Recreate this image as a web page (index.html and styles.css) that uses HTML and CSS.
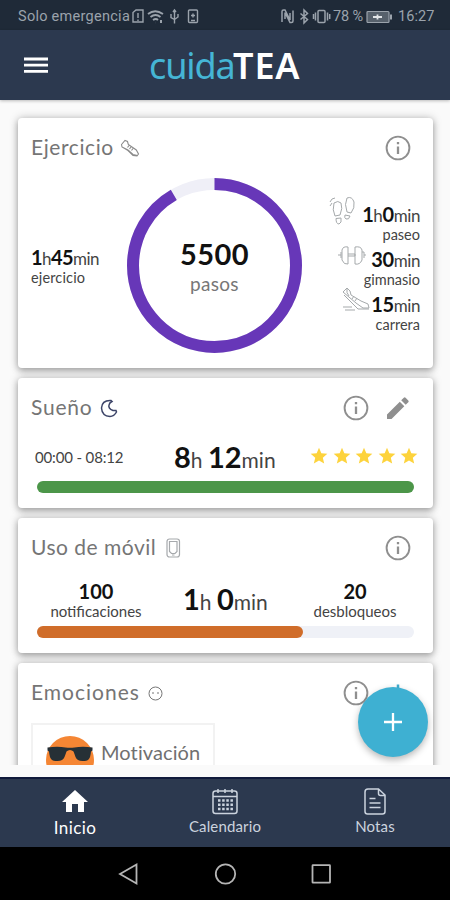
FILE: index.html
```html
<!DOCTYPE html>
<html lang="es">
<head>
<meta charset="utf-8">
<title>cuidaTEA</title>
<link rel="stylesheet" href="styles.css">
</head>
<body>
<svg width="0" height="0" class="defs">
  <symbol id="info" viewBox="0 0 26 26"><circle cx="13" cy="13" r="11.4" fill="none" stroke="#8f8f8f" stroke-width="1.9"/><path d="M13 11.5V19M13 7V9.2" stroke="#8f8f8f" stroke-width="2.3"/></symbol>
  <symbol id="star" viewBox="0 0 24 24"><path d="M12 17.3 18.2 21l-1.6-7L22 9.2l-7.2-.6L12 2 9.2 8.6 2 9.2 7.5 14l-1.7 7z" fill="#fdd33c"/></symbol>
</svg>
<div class="status">
  <span class="carrier">Solo emergencia</span>
  <svg class="icons-left" width="68" height="18" fill="none" stroke="#9ba3ac" stroke-width="1.4">
    <path d="M2 4.500 5 2h7v12H2zM7 5v5M7 11.500V13"/>
    <path d="M17 6q7-5.500 15 0M19.500 9q5-4 10 0M22 12q3-2 5 0" stroke-width="1.8"/><path d="M24.500 14.500h.1M30 12v3" stroke-width="2"/>
    <path d="M43.500 2V15.500M40 6v3.500l3.500 2L47 9V6M42 4l1.500-2L45 4"/>
    <rect x="57.500" y="2" width="9" height="12.500" rx="1"/><path d="M60 7.500h4M62 5.500v4M60 12.500h4"/>
  </svg>
  <svg class="icons-right" width="53" height="18" fill="none" stroke="#9ba3ac" stroke-width="1.500">
    <path d="M2 14V3.500Q2 2 3.500 2H5l5 10V5M13 2.500V13q0 1.500-1.500 1.500H10L5 4.500V11"/>
    <path d="m20.500 5.500 7 6-3.500 3.500V2l3.500 3.500-7 6"/>
    <rect x="38" y="2.500" width="7" height="12" rx="1"/><path d="M35.500 4.500v8M33.500 6v5M47.500 4.500v8M49.700 6v5"/>
  </svg>
  <span class="pct">78 %</span>
  <svg class="battery" width="27" height="14"><rect x="1" y="1.500" width="22" height="11" rx="1" fill="#57616c" stroke="#9ba3ac" stroke-width="1.2"/><path d="M25 4.500v5" stroke="#9ba3ac" stroke-width="2"/><path d="M7 7h9M11.500 4.500v5" stroke="#e2e5e8" stroke-width="1.8"/></svg>
  <span class="clock">16:27</span>
</div>
<header class="appbar">
  <svg class="menu" width="24" height="18" stroke="#fff" stroke-width="2.800"><path d="M0 3h24M0 9.200h24M0 15.400h24"/></svg>
  <h1 class="logo"><span class="logo-a">cuida</span><span class="logo-b">TEA</span></h1>
</header>
<main class="content">
  <section class="card exercise">
    <div class="card-head"><h2 class="t-ej">Ejercicio</h2>
      <svg class="shoe" width="20" height="20" fill="none" stroke="#8b8b8b" stroke-width="1.100"><path d="M1.500 6.500 5 2.500l2.500 1 .8 3 8 5.500 2.200 4-1.500 2-4-.5L8 12.500 2 9zM2 9l6 3 5 4.500 4.500 1M9 7.500l-1.500 2M11 9l-1.500 2M13 10.500 11.500 12.500"/></svg>
      <svg class="info" width="26" height="26"><use href="#info"/></svg>
    </div>
    <div class="ex-body">
      <div class="ex-left"><div class="num"><b>1</b>h<b>45</b>min</div><div class="lab">ejercicio</div></div>
      <div class="ring">
        <svg width="175" height="175" viewBox="0 0 175 175" fill="none" stroke-width="12"><circle cx="87.500" cy="87.500" r="81.500" stroke="#efeff7"/><circle cx="87.500" cy="87.500" r="81.500" stroke="#6737b8" pathLength="360" stroke-dasharray="330 30" transform="rotate(-90 87.500 87.500)"/></svg>
        <div class="ring-text"><b>5500</b><span>pasos</span></div>
      </div>
      <div class="ex-right">
        <div class="act walk"><svg width="28" height="30" fill="none" stroke="#a5a9ab" stroke-width="1"><path d="M5 7q4-3 7 0 2 5-1 12l-5 1q-3-6-1-13zM7 22.500l5-.5q1 5-2 6-3 0-3-5.500zM1 6l2-3 3-1M1 10l2-3M18 2q5-2 7 4 1 6-3 11l-4-1q-3-8 0-14zM16 19l5 1q-1 4-4 3-2-1-1-4z"/></svg><div><div class="num"><b>1</b>h<b>0</b>min</div><div class="lab">paseo</div></div></div>
        <div class="act gym"><svg width="28" height="30" fill="none" stroke="#a5a9ab" stroke-width="1"><path d="M0 14h3M3 11v6M4 9q1-4 6-3v17q-4 1-6-4zM10 13h7v2h-7M17 6q6-1 7 3v10q-2 5-7 4zM24 11h2v6M26 14h2"/></svg><div><div class="num"><b>30</b>min</div><div class="lab">gimnasio</div></div></div>
        <div class="act run"><svg width="28" height="30" fill="none" stroke="#a5a9ab" stroke-width="1"><path d="M1 6 5 2l3 3 1 4 10 6 7 3 1 4h-6l-7-5L1 6zM2 9l14 14h11M1 21h9M3 24h10M12 10l-2 3M15 12l-2 3M5 2q-1 5 2 8"/></svg><div><div class="num"><b>15</b>min</div><div class="lab">carrera</div></div></div>
      </div>
    </div>
  </section>
  <section class="card sleep">
    <div class="card-head"><h2 class="t-su">Sueño</h2>
      <svg class="moon" width="18" height="19" fill="none" stroke="#3c4468" stroke-width="1.500"><path d="M11 1.500Q2 1 1.500 9q.5 8 8.500 8.500 4 0 6.500-4.500l-.5-1.500h-3Q8 9.500 9 6q.5-2.500 3-3.500z"/></svg>
      <svg class="info" width="26" height="26"><use href="#info"/></svg>
      <svg class="pencil" width="24" height="24" viewBox="0 0 24 24" fill="#8f8f8f"><path d="M1 18.500V23h4.500L18.300 10.200 13.800 5.700zM22.300 6.200a1.300 1.300 0 0 0 0-1.800l-2.700-2.700a1.300 1.300 0 0 0-1.800 0L15.200 4.300l4.500 4.500z"/></svg>
    </div>
    <div class="row-sleep"><span class="hours">00:00 - 08:12</span><span class="big"><b>8</b>h <b>12</b>min</span>
      <span class="stars"><svg><use href="#star"/></svg><svg><use href="#star"/></svg><svg><use href="#star"/></svg><svg><use href="#star"/></svg><svg><use href="#star"/></svg></span></div>
    <div class="bar green"></div>
  </section>
  <section class="card mobile">
    <div class="card-head"><h2 class="t-mo">Uso de móvil</h2>
      <svg class="phone" width="15" height="20" fill="none" stroke="#a6a9ac" stroke-width="1.200"><rect x="1" y="1" width="12.500" height="18" rx="2.500"/><path d="M3.500 3.500h7.500v10l-2 2H5.500l-2-2zM6 17h2.500"/></svg>
      <svg class="info" width="26" height="26"><use href="#info"/></svg>
    </div>
    <div class="row-mobile"><div class="stat"><b>100</b><span>notificaciones</span></div><span class="big"><b>1</b>h <b>0</b>min</span><div class="stat stat-r"><b>20</b><span>desbloqueos</span></div></div>
    <div class="bar track"><div class="fill"></div></div>
  </section>
  <section class="card emotions">
    <div class="card-head"><h2 class="t-em">Emociones</h2>
      <svg class="face" width="15" height="15" fill="none" stroke="#777" stroke-width="1"><circle cx="7.500" cy="7.500" r="6.500"/><path d="M4 7h2M9 7h2"/></svg>
      <svg class="info" width="26" height="26"><use href="#info"/></svg>
      <svg class="add" width="24" height="24" stroke="#42aed0" stroke-width="2.500"><path d="M12 3.500v18M3 12.500h18"/></svg>
    </div>
    <div class="chip">
      <svg width="48" height="48"><circle cx="24" cy="24" r="24" fill="#f58634"/><path d="M1.500 11.500q10-1.500 18 0 4.500.5 9 0 8-1.500 18 0v3l-1.500 1q-.5 6-2.500 8-1.500 1.500-6 1.500-5.500 0-7-4-1-3-2-5.500-1.500-1.500-3.500-1.500t-3.500 1.500q-1 3-2 5.500-1.500 4-7 4-4.500 0-6-1.500-2-2-2.500-8l-1.500-1z" fill="#263036"/></svg>
      <span>Motivación</span>
    </div>
  </section>
</main>
<button class="fab" aria-label="+"><svg width="20" height="20" stroke="#fff" stroke-width="2.300"><path d="M10 1v18M1 10h18"/></svg></button>
<nav class="tabs">
  <div class="tab active"><svg width="26" height="26"><path d="M13 2 0 14h4v10h6v-8h6v8h6V14h4z" fill="#fff"/></svg><span>Inicio</span></div>
  <div class="tab cal"><svg width="26" height="28" fill="none" stroke="#cbd3de" stroke-width="1.500"><rect x="1" y="3" width="24" height="22.500" rx="2.500"/><path d="M1 8.500h24M6 1v4M13 1v4M20 1v4"/><path d="M6 12.500h15M6 16.700h15M6 21h15" stroke-width="2.500" stroke-dasharray="2.500 1.650"/></svg><span>Calendario</span></div>
  <div class="tab note"><svg width="22" height="28" fill="none" stroke="#cbd3de" stroke-width="1.500"><path d="M4 1h10.500L21 7v16.500q0 2.500-2.500 2.500h-15Q1 26 1 23.500V4q0-3 3-3zM14.500 1v4.500q0 2 2 2H21M5.500 10.500h6M5.500 15h11M5.500 19.500h11"/></svg><span>Notas</span></div>
</nav>
<div class="sysnav">
  <svg width="20" height="24" fill="none" stroke="#b5b5b5" stroke-width="1.800"><path d="M2 12 18.500 2.500v19z"/></svg>
  <svg width="24" height="24" fill="none" stroke="#b5b5b5" stroke-width="1.800"><circle cx="12.500" cy="12" r="9.700"/></svg>
  <svg width="20" height="24" fill="none" stroke="#b5b5b5" stroke-width="1.800"><rect x=".5" y="3.200" width="17.500" height="17.500" rx=".5"/></svg>
</div>
</body>
</html>
```
FILE: styles.css
```css
* { box-sizing: border-box; }
body { margin: 0; width: 450px; height: 900px; overflow: hidden; background: #fafafa; font-family: Lato, "Open Sans", sans-serif; color: #111; display: flex; flex-direction: column; }
svg { display: block; flex: none; overflow: visible; }
.defs { display: none; }
b { font-weight: 700; }
.status { height: 30px; flex: none; background: #1f2a38; display: flex; align-items: center; padding: 3px 15px 0 18px; font: 14.5px/27px Roboto, sans-serif; color: #9ba3ac; white-space: nowrap; }
.carrier { width: 113px; letter-spacing: .27px; }
.icons-left { margin-right: 81px; }
.pct { width: 33px; letter-spacing: -.1px; }
.icons-right { width: 53px; }
.battery { margin-right: 5px; }
.clock { letter-spacing: .1px; }
.appbar { height: 70px; flex: none; background: #2c394f; display: flex; align-items: center; box-shadow: 0 1px 3px rgba(0,0,0,.25); z-index: 2; }
.menu { margin-left: 24px; }
.logo { margin: 2px 0 0 101px; font: 400 36px/70px "Noto Sans", sans-serif; display: flex; }
.logo-a { color: #45b5d5; width: 84px; letter-spacing: -1.1px; }
.logo-b { color: #fff; font-weight: 600; letter-spacing: .9px; }
.content { height: 665px; flex: none; overflow: hidden; padding: 18px 17px 0 18px; display: flex; flex-direction: column; gap: 10px; }
.card { flex: none; background: #fff; border-radius: 4px; padding: 0 13px; box-shadow: 0 3px 6px rgba(0,0,0,.26), 0 0 10px rgba(0,0,0,.22); }
.card-head { height: 60px; display: flex; align-items: center; }
.card-head h2 { margin: 0; padding-bottom: 3px; font: 400 21px/28px Lato, sans-serif; color: #757575; white-space: nowrap; }
.info { margin-left: auto; margin-right: 9px; }
.exercise { height: 250px; }
.t-ej { width: 89px; letter-spacing: .6px; }
.t-su { width: 69px; letter-spacing: .75px; }
.t-mo { width: 135px; letter-spacing: .5px; }
.t-em { width: 117px; letter-spacing: 1px; }
.ex-body { display: grid; grid-template-columns: 96px 175px 1fr; height: 175px; }
.ex-left { padding-top: 68px; }
.num { font-size: 17px; line-height: 22px; height: 22px; color: #444; white-space: nowrap; letter-spacing: -.4px; }
.num b { font-size: 20px; color: #111; }
.lab { font-size: 14.5px; line-height: 20px; color: #444; }
.ex-left .num { letter-spacing: -.55px; }
.ex-left .lab { letter-spacing: .15px; }
.ring { display: grid; }
.ring > * { grid-area: 1 / 1; }
.ring-text { display: flex; flex-direction: column; align-items: center; padding-top: 58px; }
.ring-text b { font-size: 29px; line-height: 36px; letter-spacing: .4px; }
.ring-text span { font-size: 19px; line-height: 24px; color: #777; letter-spacing: .3px; }
.ex-right { padding-top: 18px; }
.act { height: 45px; display: flex; justify-content: flex-end; gap: 5px; text-align: right; }
.act > div { padding-top: 7px; }
.gym { gap: 0; }
.gym svg { margin-right: -2px; }
.run { gap: 1px; }
.sleep { height: 130px; }
.sleep .info, .emotions .info { margin-right: 17px; }
.pencil, .add { margin-right: 10px; }
.row-sleep { height: 43px; display: flex; align-items: flex-start; }
.hours { width: 143px; padding-left: 4px; font-size: 15px; line-height: 38px; color: #444; letter-spacing: -.15px; }
.big { font-size: 21px; line-height: 38px; color: #444; white-space: nowrap; }
.big b { font-size: 29px; color: #111; }
.row-sleep .big { width: 135px; }
.stars { display: flex; gap: 2.600px; padding-top: 8px; }
.stars svg { width: 20px; height: 20px; }
.bar { height: 12px; border-radius: 6px; margin: 0 6px; }
.green { background: #4c9649; }
.mobile { height: 135px; }
.row-mobile { height: 48px; display: flex; }
.stat { width: 130px; padding-top: 3px; display: flex; flex-direction: column; align-items: center; }
.stat b { font-size: 20px; line-height: 21px; }
.stat span { font-size: 15px; line-height: 19px; color: #444; }
.row-mobile .big { width: 129px; padding: 2px 0 0 22px; }
.track { background: #eff1f7; }
.fill { width: 266px; height: 12px; border-radius: 6px; background: #d06d2a; }
.emotions { height: 180px; }
.chip { width: 184px; height: 80px; border: 2px solid #f2f2f2; padding: 11px 0 0 13px; display: flex; gap: 7px; }
.chip span { font-size: 20px; line-height: 32px; color: #707070; letter-spacing: .1px; }
.fab { position: absolute; left: 358px; top: 687px; width: 70px; height: 70px; border: 0; padding: 0; border-radius: 50%; background: #3eb0d2; display: grid; place-items: center; box-shadow: 0 3px 7px rgba(0,0,0,.28); z-index: 3; }
.tabs { margin-top: 12px; height: 70px; flex: none; background: #2c394f; border-top: 2px solid #101b3b; display: grid; grid-template-columns: repeat(3, 150px); }
.tab { display: flex; flex-direction: column; align-items: center; padding-top: 9px; color: #cbd3de; font-size: 15px; line-height: 20px; letter-spacing: .15px; }
.tab svg { height: 28px; }
.tab.active { color: #fff; font-size: 17px; line-height: 24px; letter-spacing: .4px; }
.sysnav { height: 53px; background: #000; display: flex; justify-content: center; align-items: center; gap: 75px; }
```
